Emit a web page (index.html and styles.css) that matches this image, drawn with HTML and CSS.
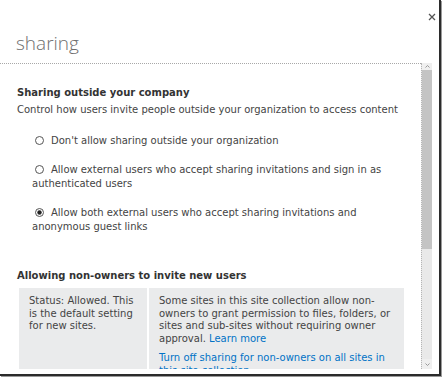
FILE: index.html
```html
<!DOCTYPE html>
<html>
<head>
<meta charset="utf-8">
<link rel="stylesheet" href="styles.css">
</head>
<body>
<div class="dialog">
  <div class="header">
    <div class="close-row">
      <svg class="close" width="8" height="8" viewBox="0 0 8 8"><path d="M1 1L7 7M7 1L1 7" stroke="#555" stroke-width="1.3" fill="none"/></svg>
    </div>
    <h1 class="title">sharing</h1>
  </div>
  <div class="body">
    <div class="content">
      <h2 class="section-title">Sharing outside your company</h2>
      <p class="desc">Control how users invite people outside your organization to access content</p>
      <div class="options">
        <div class="option"><svg class="radio" width="9" height="9" viewBox="0 0 9 9"><circle cx="4.5" cy="4.5" r="4" fill="#fff" stroke="#555"/></svg>Don't allow sharing outside your organization</div>
        <div class="option"><svg class="radio" width="9" height="9" viewBox="0 0 9 9"><circle cx="4.5" cy="4.5" r="4" fill="#fff" stroke="#555"/></svg>Allow external users who accept sharing invitations and sign in as authenticated users</div>
        <div class="option"><svg class="radio" width="9" height="9" viewBox="0 0 9 9"><circle cx="4.5" cy="4.5" r="4" fill="#fff" stroke="#555"/><circle cx="4.5" cy="4.5" r="2.2" fill="#222"/></svg>Allow both external users who accept sharing invitations and anonymous guest links</div>
      </div>
      <h2 class="section-title second">Allowing non-owners to invite new users</h2>
      <div class="status-table">
        <div class="cell status">Status: Allowed. This is the default setting for new sites.</div>
        <div class="cell info">
          <p>Some sites in this site collection allow non-owners to grant permission to files, folders, or sites and sub-sites without requiring owner approval. <a href="#">Learn more</a></p>
          <p><a href="#">Turn off sharing for non-owners on all sites in this site collection</a></p>
        </div>
      </div>
    </div>
    <div class="scrollbar">
      <div class="arrow up"><svg width="5" height="3" viewBox="0 0 5 3"><path d="M0.5 2.5L2.5 0.5L4.5 2.5" stroke="#999" fill="none"/></svg></div>
      <div class="thumb"></div>
      <div class="track"></div>
      <div class="arrow down"><svg width="5" height="3" viewBox="0 0 5 3"><path d="M0.5 0.5L2.5 2.5L4.5 0.5" stroke="#999" fill="none"/></svg></div>
    </div>
  </div>
</div>
</body>
</html>
```
FILE: styles.css
```css
* { box-sizing: border-box; }
html, body { margin: 0; padding: 0; background: #fff; }
body {
  width: 444px;
  height: 378px;
  overflow: hidden;
  font-family: "DejaVu Sans", Verdana, sans-serif;
  font-size: 10px;
  color: #444;
}
.dialog {
  width: 441px;
  height: 376px;
  background: #fff;
  border-right: 2px solid #2b2b2b;
  border-bottom: 2px solid #2b2b2b;
  box-shadow: 1px 1px 0 #9a9a9a;
  display: flex;
  flex-direction: column;
}
.header {
  height: 63px;
  flex: none;
  padding-left: 16px;
}
.close-row {
  height: 31px;
  display: flex;
  justify-content: flex-end;
  align-items: flex-start;
  padding: 13px 3px 0 0;
}
.close { display: block; }
.title {
  margin: 0;
  font-family: "Open Sans", "Segoe UI", sans-serif;
  font-weight: 300;
  font-size: 19px;
  line-height: 25px;
  color: #6e6e6e;
}
.body {
  display: flex;
  height: 306px;
  flex: none;
  padding-right: 7px;
}
.content {
  flex: 1;
  border-top: 1px dotted #a8a8a8;
  overflow: hidden;
  padding: 22px 17px 0 17px;
  line-height: 14px;
}
.section-title {
  margin: 0;
  font-size: 10px;
  font-weight: bold;
  line-height: 14px;
  color: #333;
}
.section-title.second { margin-top: 35px; }
.desc { margin: 3px 0 0; }
.options {
  margin-top: 17px;
  padding-left: 15px;
}
.option + .option { margin-top: 15px; }
.radio {
  display: inline-block;
  vertical-align: -1px;
  margin: 0 7px 0 3px;
}
.status-table {
  margin: 5px 0 0 2px;
  width: 385px;
  display: grid;
  grid-template-columns: 128px 1fr;
  column-gap: 2px;
}
.cell {
  background: #eaebec;
  padding: 7px 6px 20px 10px;
  line-height: 12.5px;
}
.info p { margin: 0; }
.info p + p { margin-top: 7px; }
a { color: #0072c6; text-decoration: none; }
.scrollbar {
  width: 11px;
  flex: none;
  border-left: 1px dotted #b5b5b5;
  background: #e9e9e9;
  display: flex;
  flex-direction: column;
}
.arrow {
  display: flex;
  align-items: center;
  justify-content: center;
  background: #efefef;
}
.arrow svg { display: block; }
.arrow.up { height: 7px; }
.arrow.down { height: 10px; }
.thumb { height: 179px; background: #c4c4c4; }
.track { flex: 1; }
```
